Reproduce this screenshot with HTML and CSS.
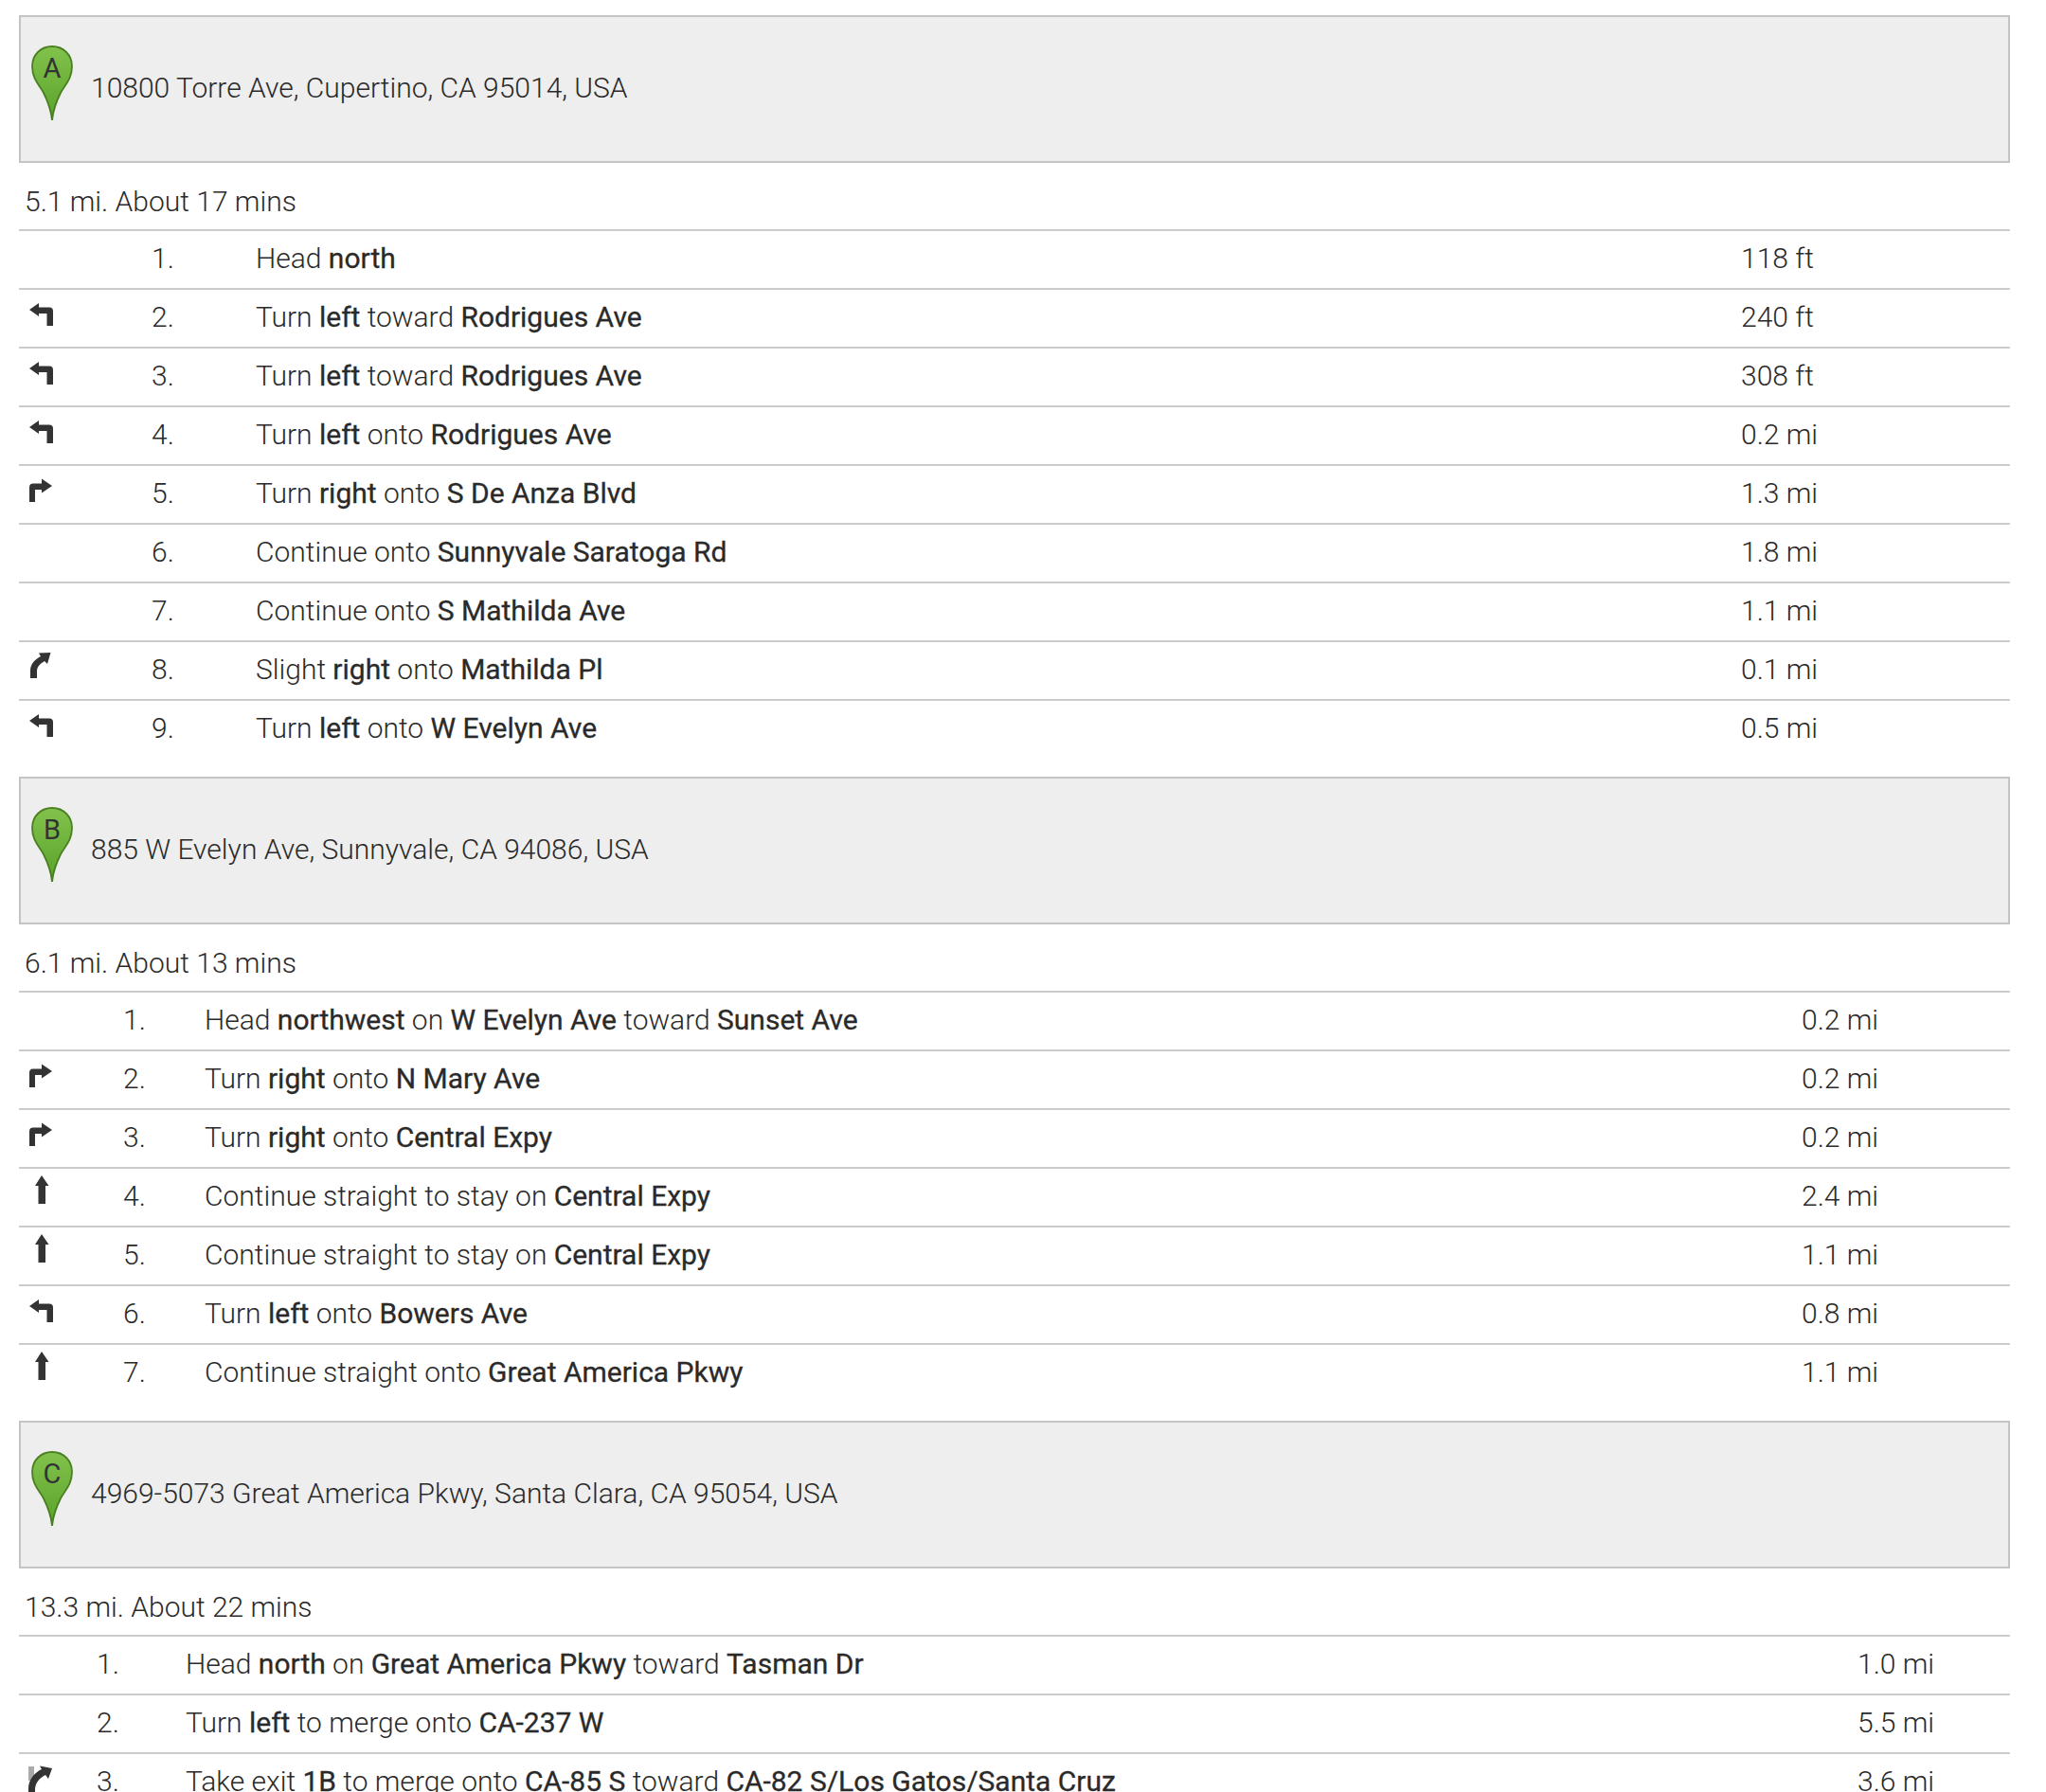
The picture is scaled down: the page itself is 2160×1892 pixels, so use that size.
FILE: index.html
```html
<!DOCTYPE html>
<html lang="en">
<head>
<meta charset="utf-8">
<title>Directions</title>
<link rel="stylesheet" href="styles.css">
</head>
<body>
<svg class="defs" width="0" height="0" aria-hidden="true">
  <defs>
    <linearGradient id="pinfill" x1="0" y1="0" x2="0" y2="1">
      <stop offset="0" stop-color="#82c24c"/>
      <stop offset="1" stop-color="#5aa32a"/>
    </linearGradient>
    <symbol id="pin" viewBox="0 0 44 80">
      <path d="M22 79C21 68 18 60 13 50C9 42 1 36 1 22C1 10 10 1 22 1C34 1 43 10 43 22C43 36 35 42 31 50C26 60 23 68 22 79Z" fill="url(#pinfill)" stroke="#4a7f22" stroke-width="1.8"/>
    </symbol>
    <symbol id="left" viewBox="0 0 30 40">
      <path d="M1 17L11 10V14.500H22Q26 14.500 26 18.500V34H19.500V21H11V24Z" fill="#333"/>
    </symbol>
    <symbol id="right" viewBox="0 0 30 40">
      <path d="M25 17L14 9.500V14.500H5Q1 14.500 1 18.500V34H7V21H14V24.500Z" fill="#333"/>
    </symbol>
    <symbol id="straight" viewBox="0 0 30 40">
      <path d="M14 3L21.500 14H18V33H10.500V14H7Z" fill="#333"/>
    </symbol>
    <symbol id="slight" viewBox="0 0 30 40">
      <path d="M23.500 7L20 19L17 16C12 19 9 22 9 27V34H2V26C2 19 7 14 13 11L11 7.500Z" fill="#333"/>
    </symbol>
    <symbol id="exit" viewBox="0 0 30 40">
      <path d="M0 9H6V24H0Z" fill="#aaa"/>
      <path d="M25 11L21 22L18 18C12 21 7 26 7 34V40H0V32C0 23 7 15 14 12L12 8.500Z" fill="#333"/>
    </symbol>
  </defs>
</svg>

<main class="page">

<section class="stop">
  <div class="pin"><svg class="pin-shape"><use href="#pin"/></svg><span class="pin-letter">A</span></div>
  <div class="address">10800 Torre Ave, Cupertino, CA 95014, USA</div>
</section>
<div class="summary">5.1 mi. About 17 mins</div>
<div class="steps steps-a">
  <div class="step"><span class="ico"></span><span class="num">1.</span><span class="txt">Head <b>north</b></span><span class="dist">118 ft</span></div>
  <div class="step"><span class="ico"><svg class="arrow"><use href="#left"/></svg></span><span class="num">2.</span><span class="txt">Turn <b>left</b> toward <b>Rodrigues Ave</b></span><span class="dist">240 ft</span></div>
  <div class="step"><span class="ico"><svg class="arrow"><use href="#left"/></svg></span><span class="num">3.</span><span class="txt">Turn <b>left</b> toward <b>Rodrigues Ave</b></span><span class="dist">308 ft</span></div>
  <div class="step"><span class="ico"><svg class="arrow"><use href="#left"/></svg></span><span class="num">4.</span><span class="txt">Turn <b>left</b> onto <b>Rodrigues Ave</b></span><span class="dist">0.2 mi</span></div>
  <div class="step"><span class="ico"><svg class="arrow"><use href="#right"/></svg></span><span class="num">5.</span><span class="txt">Turn <b>right</b> onto <b>S De Anza Blvd</b></span><span class="dist">1.3 mi</span></div>
  <div class="step"><span class="ico"></span><span class="num">6.</span><span class="txt">Continue onto <b>Sunnyvale Saratoga Rd</b></span><span class="dist">1.8 mi</span></div>
  <div class="step"><span class="ico"></span><span class="num">7.</span><span class="txt">Continue onto <b>S Mathilda Ave</b></span><span class="dist">1.1 mi</span></div>
  <div class="step"><span class="ico"><svg class="arrow"><use href="#slight"/></svg></span><span class="num">8.</span><span class="txt">Slight <b>right</b> onto <b>Mathilda Pl</b></span><span class="dist">0.1 mi</span></div>
  <div class="step"><span class="ico"><svg class="arrow"><use href="#left"/></svg></span><span class="num">9.</span><span class="txt">Turn <b>left</b> onto <b>W Evelyn Ave</b></span><span class="dist">0.5 mi</span></div>
</div>

<section class="stop">
  <div class="pin"><svg class="pin-shape"><use href="#pin"/></svg><span class="pin-letter">B</span></div>
  <div class="address">885 W Evelyn Ave, Sunnyvale, CA 94086, USA</div>
</section>
<div class="summary">6.1 mi. About 13 mins</div>
<div class="steps steps-b">
  <div class="step"><span class="ico"></span><span class="num">1.</span><span class="txt">Head <b>northwest</b> on <b>W Evelyn Ave</b> toward <b>Sunset Ave</b></span><span class="dist">0.2 mi</span></div>
  <div class="step"><span class="ico"><svg class="arrow"><use href="#right"/></svg></span><span class="num">2.</span><span class="txt">Turn <b>right</b> onto <b>N Mary Ave</b></span><span class="dist">0.2 mi</span></div>
  <div class="step"><span class="ico"><svg class="arrow"><use href="#right"/></svg></span><span class="num">3.</span><span class="txt">Turn <b>right</b> onto <b>Central Expy</b></span><span class="dist">0.2 mi</span></div>
  <div class="step"><span class="ico"><svg class="arrow"><use href="#straight"/></svg></span><span class="num">4.</span><span class="txt">Continue straight to stay on <b>Central Expy</b></span><span class="dist">2.4 mi</span></div>
  <div class="step"><span class="ico"><svg class="arrow"><use href="#straight"/></svg></span><span class="num">5.</span><span class="txt">Continue straight to stay on <b>Central Expy</b></span><span class="dist">1.1 mi</span></div>
  <div class="step"><span class="ico"><svg class="arrow"><use href="#left"/></svg></span><span class="num">6.</span><span class="txt">Turn <b>left</b> onto <b>Bowers Ave</b></span><span class="dist">0.8 mi</span></div>
  <div class="step"><span class="ico"><svg class="arrow"><use href="#straight"/></svg></span><span class="num">7.</span><span class="txt">Continue straight onto <b>Great America Pkwy</b></span><span class="dist">1.1 mi</span></div>
</div>

<section class="stop">
  <div class="pin"><svg class="pin-shape"><use href="#pin"/></svg><span class="pin-letter">C</span></div>
  <div class="address">4969-5073 Great America Pkwy, Santa Clara, CA 95054, USA</div>
</section>
<div class="summary">13.3 mi. About 22 mins</div>
<div class="steps steps-c">
  <div class="step"><span class="ico"></span><span class="num">1.</span><span class="txt">Head <b>north</b> on <b>Great America Pkwy</b> toward <b>Tasman Dr</b></span><span class="dist">1.0 mi</span></div>
  <div class="step"><span class="ico"></span><span class="num">2.</span><span class="txt">Turn <b>left</b> to merge onto <b>CA-237 W</b></span><span class="dist">5.5 mi</span></div>
  <div class="step"><span class="ico"><svg class="arrow"><use href="#exit"/></svg></span><span class="num">3.</span><span class="txt">Take exit <b>1B</b> to merge onto <b>CA-85 S</b> toward <b>CA-82 S/Los Gatos/Santa Cruz</b></span><span class="dist">3.6 mi</span></div>
</div>

</main>
</body>
</html>
```
FILE: styles.css
```css
html, body {
  margin: 0;
  padding: 0;
  background: #fff;
}
html {
  height: 1892px;
  overflow: hidden;
}
.defs {
  position: absolute;
}
.page {
  padding: 16px 38px 0 20px;
  font-family: Roboto, "Liberation Sans", sans-serif;
  font-size: 30px;
  font-weight: 300;
  line-height: 40px;
  color: #2a2a2a;
}
b {
  font-weight: 400;
  -webkit-text-stroke: 0.3px currentColor;
}
.stop {
  box-sizing: border-box;
  height: 156px;
  display: flex;
  align-items: flex-start;
  background: #eee;
  border: 2px solid #c4c4c4;
}
.pin {
  position: relative;
  width: 44px;
  height: 80px;
  margin: 30px 19px 0 11px;
}
.pin-shape {
  display: block;
  width: 44px;
  height: 80px;
}
.pin-letter {
  position: absolute;
  top: 8px;
  left: 0;
  width: 100%;
  text-align: center;
  font-size: 29px;
  line-height: 32px;
  font-weight: 400;
  color: #333;
}
.address {
  margin-top: 55px;
}
.summary {
  padding: 21px 0 9px 6px;
  height: 40px;
  box-sizing: content-box;
}
.steps {
  display: grid;
  margin-bottom: 20px;
}
.steps-a { --num: 110px; --ico: 140px; --txt: 1568px; }
.steps-b { --num: 86px; --ico: 110px; --txt: 1686px; }
.steps-c { --num: 94px; --ico: 82px; --txt: 1765px; }
.step {
  display: grid;
  grid-template-columns: var(--ico) var(--num) var(--txt) 1fr;
  height: 62px;
  box-sizing: border-box;
  border-top: 2px solid #ccc;
  padding-top: 9px;
}
.ico {
  display: block;
  position: relative;
}
.arrow {
  display: block;
  width: 30px;
  height: 40px;
  margin: -5px 0 0 10px;
}
```
